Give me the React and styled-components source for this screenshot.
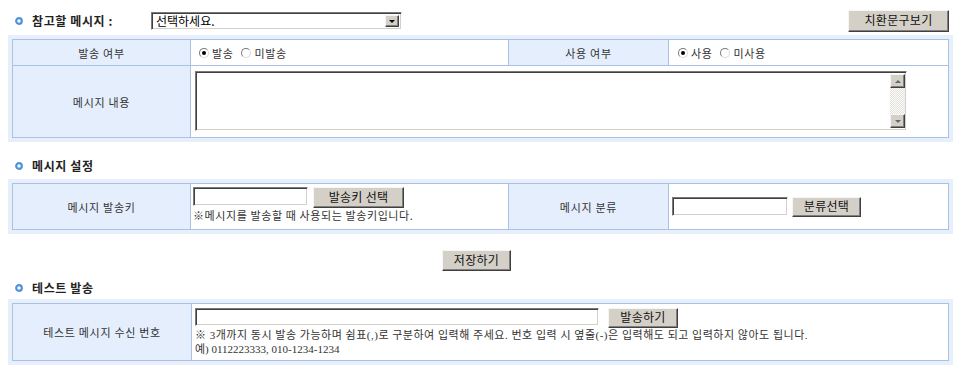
import React from 'react';
import styled, { createGlobalStyle } from 'styled-components';

const Global = createGlobalStyle`
  html, body { margin: 0; padding: 0; background: #fff; }
  body {
    font-family: "Noto Sans CJK KR", sans-serif;
    font-size: 11px;
    color: #333;
  }
  * { box-sizing: border-box; }
`;

const BAND = '#e7effb';
const LINE = '#a9c1e5';
const LABEL_BG = '#e5eefc';

const Page = styled.div`
  width: 953px;
  padding: 8px 0 8px 8px;
`;

const Header = styled.div`
  display: flex;
  align-items: center;
  height: 27px;
  padding: 2px 4px 3px 0;
`;

const SectionTitle = styled.div`
  display: flex;
  align-items: center;
  height: 16px;
  margin: ${p => p.$mt}px 0 ${p => p.$mb}px;
`;

const Bullet = styled.svg`
  flex: 0 0 auto;
  width: 8px;
  height: 8px;
  margin-left: 7px;
  margin-right: 9px;
`;

const TitleText = styled.span`
  font-size: 12px;
  font-weight: bold;
  color: #222;
  letter-spacing: 0.6px;
  width: ${p => (p.$w ? `${p.$w}px` : 'auto')};
  white-space: nowrap;
  line-height: 16px;
`;

const SelectBox = styled.div`
  display: flex;
  align-items: stretch;
  width: 251px;
  height: 18px;
  border: 1px solid;
  border-color: #7a7a7a #ffffff #ffffff #7a7a7a;
  box-shadow: inset 1px 1px #404040, inset -1px -1px #d4d0c8;
  background: #fff;
  padding: 2px;
`;

const SelectText = styled.span`
  flex: 1;
  font-size: 12px;
  line-height: 12px;
  color: #000;
  padding-left: 2px;
`;

const SelectArrow = styled.span`
  width: 14px;
  display: flex;
  align-items: center;
  justify-content: center;
  background: #d4d0c8;
  border: 1px solid;
  border-color: #f4f4f4 #404040 #404040 #f4f4f4;
  box-shadow: inset -1px -1px #808080;
  &::after {
    content: '';
    width: 0;
    height: 0;
    border-left: 3px solid transparent;
    border-right: 3px solid transparent;
    border-top: 3px solid #000;
  }
`;

const Button = styled.button`
  flex: 0 0 auto;
  width: ${p => p.$w}px;
  height: ${p => p.$h}px;
  padding: 0 0 2px;
  font-family: "Noto Sans CJK KR", sans-serif;
  font-size: 12px;
  line-height: 14px;
  letter-spacing: 0.3px;
  color: #111;
  background: #d4d0c8;
  border: 1px solid;
  border-color: #f6f6f6 #404040 #404040 #f6f6f6;
  box-shadow: inset -1px -1px #808080;
  cursor: pointer;
  margin-left: ${p => (p.$ml ? `${p.$ml}px` : '0')};
`;

const PushRight = styled.span`
  flex: 1;
`;

const Frame = styled.div`
  background: ${BAND};
  padding: 4px;
`;

const Grid = styled.div`
  display: grid;
  grid-template-columns: ${p => p.$cols};
  grid-template-rows: ${p => p.$rows};
  gap: 1px;
  background: ${LINE};
  border: 1px solid ${LINE};
`;

const Label = styled.div`
  background: ${LABEL_BG};
  display: flex;
  align-items: center;
  justify-content: center;
  font-size: 11px;
  letter-spacing: 0.7px;
  color: #333;
`;

const Value = styled.div`
  background: #fff;
  display: flex;
  flex-direction: ${p => (p.$col ? 'column' : 'row')};
  align-items: ${p => (p.$col ? 'flex-start' : 'center')};
  padding: ${p => p.$pad || '0'};
  grid-column: ${p => p.$span || 'auto'};
`;

const RadioGroup = styled.div`
  display: flex;
  align-items: center;
  gap: 8px;
`;

const RadioItem = styled.label`
  display: flex;
  align-items: center;
  gap: 3px;
  font-size: 11px;
  letter-spacing: 0.6px;
  color: #333;
`;

const RadioDot = styled.span`
  position: relative;
  width: 10px;
  height: 10px;
  border-radius: 50%;
  border: 1px solid;
  border-color: #7a7a7a #dcdcdc #dcdcdc #7a7a7a;
  background: #fff;
  &::after {
    content: '';
    display: ${p => (p.$on ? 'block' : 'none')};
    position: absolute;
    left: 2px;
    top: 2px;
    width: 4px;
    height: 4px;
    border-radius: 50%;
    background: #000;
  }
`;

const TextAreaBox = styled.div`
  display: flex;
  width: 712px;
  height: 60px;
  border: 1px solid;
  border-color: #7a7a7a #ffffff #ffffff #7a7a7a;
  box-shadow: inset 1px 1px #404040, inset -1px -1px #d4d0c8;
  padding: 2px 1px 2px 2px;
  background: #fff;
`;

const TextArea = styled.textarea`
  flex: 1;
  border: none;
  outline: none;
  resize: none;
  background: transparent;
  font-family: "Noto Sans CJK KR", sans-serif;
  font-size: 12px;
`;

const ScrollBar = styled.div`
  width: 15px;
  display: flex;
  flex-direction: column;
  justify-content: space-between;
  background: repeating-conic-gradient(#e4e2dc 0 25%, #fbfbfb 0 50%) 0 0 / 2px 2px;
`;

const ScrollBtn = styled.span`
  height: 14px;
  display: flex;
  align-items: center;
  justify-content: center;
  background: #d4d0c8;
  border: 1px solid;
  border-color: #f4f4f4 #404040 #404040 #f4f4f4;
  box-shadow: inset -1px -1px #808080;
  &::after {
    content: '';
    width: 0;
    height: 0;
    border-left: 3px solid transparent;
    border-right: 3px solid transparent;
    ${p => (p.$up ? 'border-bottom: 3px solid #666;' : 'border-top: 3px solid #666;')}
  }
`;

const Input = styled.input`
  flex: 0 0 auto;
  width: ${p => p.$w}px;
  height: ${p => p.$h}px;
  border: 1px solid;
  border-color: #7a7a7a #ffffff #ffffff #7a7a7a;
  box-shadow: inset 1px 1px #404040, inset -1px -1px #d4d0c8;
  outline: none;
  padding: 0 3px;
  font-size: 12px;
  background: #fff;
`;

const InputRow = styled.div`
  display: flex;
  align-items: flex-start;
`;

const Note = styled.div`
  font-size: 11px;
  line-height: 14px;
  color: #333;
  white-space: nowrap;
  font-family: ${p => (p.$serif ? '"Liberation Serif", "Noto Sans CJK KR", serif' : '"Noto Sans CJK KR", sans-serif')};
  letter-spacing: ${p => p.$ls || 'normal'};
`;

const SaveRow = styled.div`
  display: flex;
  justify-content: center;
  padding: 16px 8px 0 0;
`;

const BulletIcon = () => (
  <Bullet viewBox="0 0 8 8">
    <circle cx="4" cy="4" r="2.8" fill="#fff" stroke="#4f93de" strokeWidth="2.2" />
  </Bullet>
);

const Radio = ({ on, children }) => (
  <RadioItem>
    <RadioDot $on={on} />
    {children}
  </RadioItem>
);

export default function App() {
  return (
    <>
      <Global />
      <Page>
        <Header>
          <BulletIcon />
          <TitleText $w={119}>참고할 메시지 :</TitleText>
          <SelectBox>
            <SelectText>선택하세요.</SelectText>
            <SelectArrow />
          </SelectBox>
          <PushRight />
          <Button $w={101} $h={22}>치환문구보기</Button>
        </Header>

        <Frame>
          <Grid $cols="177px 317px 159px 1fr" $rows="25px 71px">
            <Label>발송 여부</Label>
            <Value $pad="0 0 0 8px">
              <RadioGroup>
                <Radio on>발송</Radio>
                <Radio>미발송</Radio>
              </RadioGroup>
            </Value>
            <Label>사용 여부</Label>
            <Value $pad="0 0 0 9px">
              <RadioGroup>
                <Radio on>사용</Radio>
                <Radio>미사용</Radio>
              </RadioGroup>
            </Value>
            <Label>메시지 내용</Label>
            <Value $span="2 / 5" $col $pad="5px 4px">
              <TextAreaBox>
                <TextArea />
                <ScrollBar>
                  <ScrollBtn $up />
                  <ScrollBtn />
                </ScrollBar>
              </TextAreaBox>
            </Value>
          </Grid>
        </Frame>

        <SectionTitle $mt={16} $mb={5}>
          <BulletIcon />
          <TitleText>메시지 설정</TitleText>
        </SectionTitle>

        <Frame>
          <Grid $cols="177px 317px 159px 1fr" $rows="45px">
            <Label>메시지 발송키</Label>
            <Value $col $pad="3px 2px">
              <InputRow>
                <Input $w={115} $h={19} />
                <Button $w={91} $h={21} $ml={5}>발송키 선택</Button>
              </InputRow>
              <Note $ls="0.6px">※메시지를 발송할 때 사용되는 발송키입니다.</Note>
            </Value>
            <Label>메시지 분류</Label>
            <Value $pad="0 0 0 3px">
              <Input $w={116} $h={19} />
              <Button $w={69} $h={20} $ml={4}>분류선택</Button>
            </Value>
          </Grid>
        </Frame>

        <SaveRow>
          <Button $w={69} $h={21}>저장하기</Button>
        </SaveRow>

        <SectionTitle $mt={9} $mb={3}>
          <BulletIcon />
          <TitleText>테스트 발송</TitleText>
        </SectionTitle>

        <Frame>
          <Grid $cols="178px 1fr" $rows="56px">
            <Label>테스트 메시지 수신 번호</Label>
            <Value $col $pad="4px 3px">
              <InputRow>
                <Input $w={404} $h={18} />
                <Button $w={70} $h={20} $ml={9}>발송하기</Button>
              </InputRow>
              <Note $serif $ls="0.5px">※ 3개까지 동시 발송 가능하며 쉼표(,)로 구분하여 입력해 주세요. 번호 입력 시 옆줄(-)은 입력해도 되고 입력하지 않아도 됩니다.</Note>
              <Note $serif>예) 0112223333, 010-1234-1234</Note>
            </Value>
          </Grid>
        </Frame>
      </Page>
    </>
  );
}
